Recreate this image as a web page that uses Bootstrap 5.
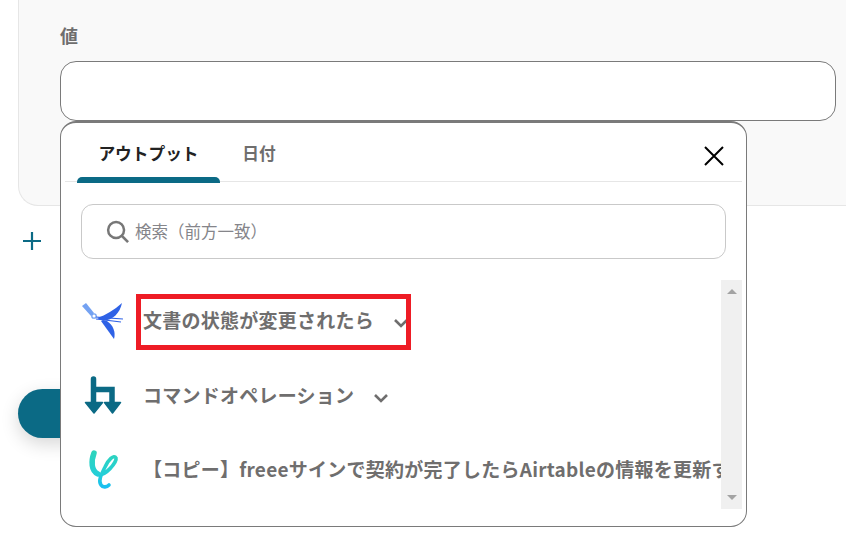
<!DOCTYPE html>
<html lang="ja">
<head>
<meta charset="utf-8">
<link href="https://cdn.jsdelivr.net/npm/bootstrap@5.3.0/dist/css/bootstrap.min.css" rel="stylesheet">
<style>
html,body{height:552px;overflow:hidden}
body{background:#fff;font-family:"Noto Sans CJK JP","Liberation Sans",sans-serif;position:relative;color:#6f6e6e}
.pane{margin-left:18px;height:206px;background:#f9f9f9;border:1px solid #e6e6e6;border-top:0;border-right:0;border-bottom-left-radius:20px;padding:23px 10px 0 41px}
.val-label{font-size:18px;font-weight:700;line-height:24px;height:24px;margin-bottom:14px;color:#6f6e6e}
.val-input{height:60px;background:#fff;border:1px solid #7a7a7a;border-radius:16px}
.add-row{margin:25px 0 0 22px;height:24px;color:#0b6a85}
.save-btn{position:absolute;left:18px;top:389px;width:100px;height:49px;background:#0b6a85;border-radius:25px 0 0 25px;box-shadow:0 6px 18px rgba(0,0,0,.16)}
.picker{position:absolute;left:60px;top:121px;width:687px;height:406px;background:#fff;border:1px solid #7a7a7a;border-top-width:2px;border-radius:16px;z-index:2}
.tabbar{height:59px;margin:0 4px;border-bottom:1px solid #e6e6e6;position:relative;padding-left:12px}
.tab-item{width:143px;height:59px;font-size:16.7px;line-height:60px;font-weight:700;text-align:center;color:#6f6e6e}
.tab-item.on{color:#222;position:relative}
.tab-item.on::after{content:"";position:absolute;left:0;right:0;bottom:-1px;height:6px;background:#0b6a85;border-radius:5px 5px 0 0}
.tab-plain{width:78px}
.shut{position:absolute;right:17px;top:22px;line-height:0}
.finder{margin:22px 20px 0 20px;height:55px;border:1px solid #c9c9c9;border-radius:12px;padding-left:24px;gap:5px;font-size:16.5px;color:#85858a}
.listing{margin-top:21px;height:229px;position:relative;padding-right:25px}
.rows{overflow:hidden;height:229px;padding-top:3px}
.entry{height:75px;font-size:19px;font-weight:700;color:#6f6e6e;white-space:nowrap;letter-spacing:.25px}
.entry-last{margin-top:-1px}
.ico-slot{width:82px;flex:none;padding-left:20px}
.scroll-track{position:absolute;right:4px;top:0;width:21px;height:229px;background:#f0f0f0}
.tri-up,.tri-down{position:absolute;left:6px;width:0;height:0;border-left:5px solid transparent;border-right:5px solid transparent}
.tri-up{top:9px;border-bottom:5px solid #a3a3a3}
.tri-down{bottom:9px;border-top:5px solid #a3a3a3}
.redbox{position:absolute;left:136px;top:294px;width:275px;height:56px;border:5px solid #ee1c25;z-index:3;pointer-events:none}
.chev{margin-left:19px;flex:none;margin-top:5px}
</style>
</head>
<body>
<div class="pane">
  <div class="val-label">値</div>
  <div class="val-input"></div>
</div>
<div class="add-row d-flex">
  <svg width="20" height="20" viewBox="0 0 20 20"><path d="M1 10H19M10 1V19" stroke="#0b6a85" stroke-width="2.2" fill="none"/></svg>
</div>
<div class="save-btn"></div>

<div class="picker">
  <div class="tabbar d-flex">
    <div class="tab-item on">アウトプット</div>
    <div class="tab-item tab-plain">日付</div>
    <div class="shut">
      <svg width="22" height="22" viewBox="0 0 22 22"><path d="M2 2L20 20M20 2L2 20" stroke="#000" stroke-width="2" fill="none"/></svg>
    </div>
  </div>
  <div class="finder d-flex align-items-center">
    <svg width="24" height="24" viewBox="0 0 25 25"><circle cx="10.5" cy="10.5" r="8.3" stroke="#777" stroke-width="2.6" fill="none"/><path d="M16.5 16.5L23 23" stroke="#777" stroke-width="2.8" fill="none"/></svg>
    <span>検索（前方一致）</span>
  </div>
  <div class="listing">
    <div class="rows">
      <div class="entry d-flex align-items-center">
        <div class="ico-slot">
          <svg width="42" height="38" viewBox="0 0 42 38"><path d="M1 4L5 1L13 11L10 14Z" fill="#74a2f2"/><circle cx="13" cy="14" r="2.2" fill="none" stroke="#74a2f2" stroke-width="1.3"/><path d="M16 16C25 13 33 8 41 1C39 11 32 18 22 19Z" fill="#2f62e6"/><path d="M20 19L33 37C35 30 32 23 26 19Z" fill="#2f62e6"/><path d="M15 15L42 17L27 16M15 17L40 20L24 18" stroke="#2f62e6" stroke-width="1.1" fill="none"/></svg>
        </div>
        <span>文書の状態が変更されたら</span>
        <svg class="chev" width="16" height="10" viewBox="0 0 16 10"><path d="M2 2L8 8L14 2" stroke="#6f6e6e" stroke-width="2.6" fill="none"/></svg>
      </div>
      <div class="entry d-flex align-items-center">
        <div class="ico-slot">
          <svg width="42" height="40" viewBox="0 0 42 40"><path d="M12.500 3V27M12.500 13.500H31V27" stroke="#0b6a85" stroke-width="5.500" fill="none" stroke-linecap="round"/><path d="M4.500 26.500H21.500L13 37ZM23.500 26.500H39.500L31.500 37Z" fill="#0b6a85" stroke="#0b6a85" stroke-width="1.500" stroke-linejoin="round"/></svg>
        </div>
        <span>コマンドオペレーション</span>
        <svg class="chev" width="16" height="10" viewBox="0 0 16 10"><path d="M2 2L8 8L14 2" stroke="#6f6e6e" stroke-width="2.6" fill="none"/></svg>
      </div>
      <div class="entry entry-last d-flex align-items-center">
        <div class="ico-slot">
          <svg width="42" height="42" viewBox="0 0 42 42">
            <defs><linearGradient id="gr" gradientUnits="userSpaceOnUse" x1="0" y1="2" x2="0" y2="40"><stop offset="0" stop-color="#2ed4bb"/><stop offset=".6" stop-color="#25cfd6"/><stop offset="1" stop-color="#18bdf5"/></linearGradient></defs>
            <path d="M13 4C10 12 10 22 17 25" stroke="url(#gr)" stroke-width="5.500" fill="none" stroke-linecap="round"/>
            <path d="M17 25C24 28 36 13 35 9C33 5 27 11 24 18C20 26 17 32 20 36C22 39 26 38 28 36" stroke="url(#gr)" stroke-width="3.600" fill="none" stroke-linecap="round"/>
          </svg>
        </div>
        <span>【コピー】freeeサインで契約が完了したらAirtableの情報を更新する</span>
      </div>
    </div>
    <div class="scroll-track"><div class="tri-up"></div><div class="tri-down"></div></div>
  </div>
</div>
<div class="redbox"></div>
</body>
</html>
